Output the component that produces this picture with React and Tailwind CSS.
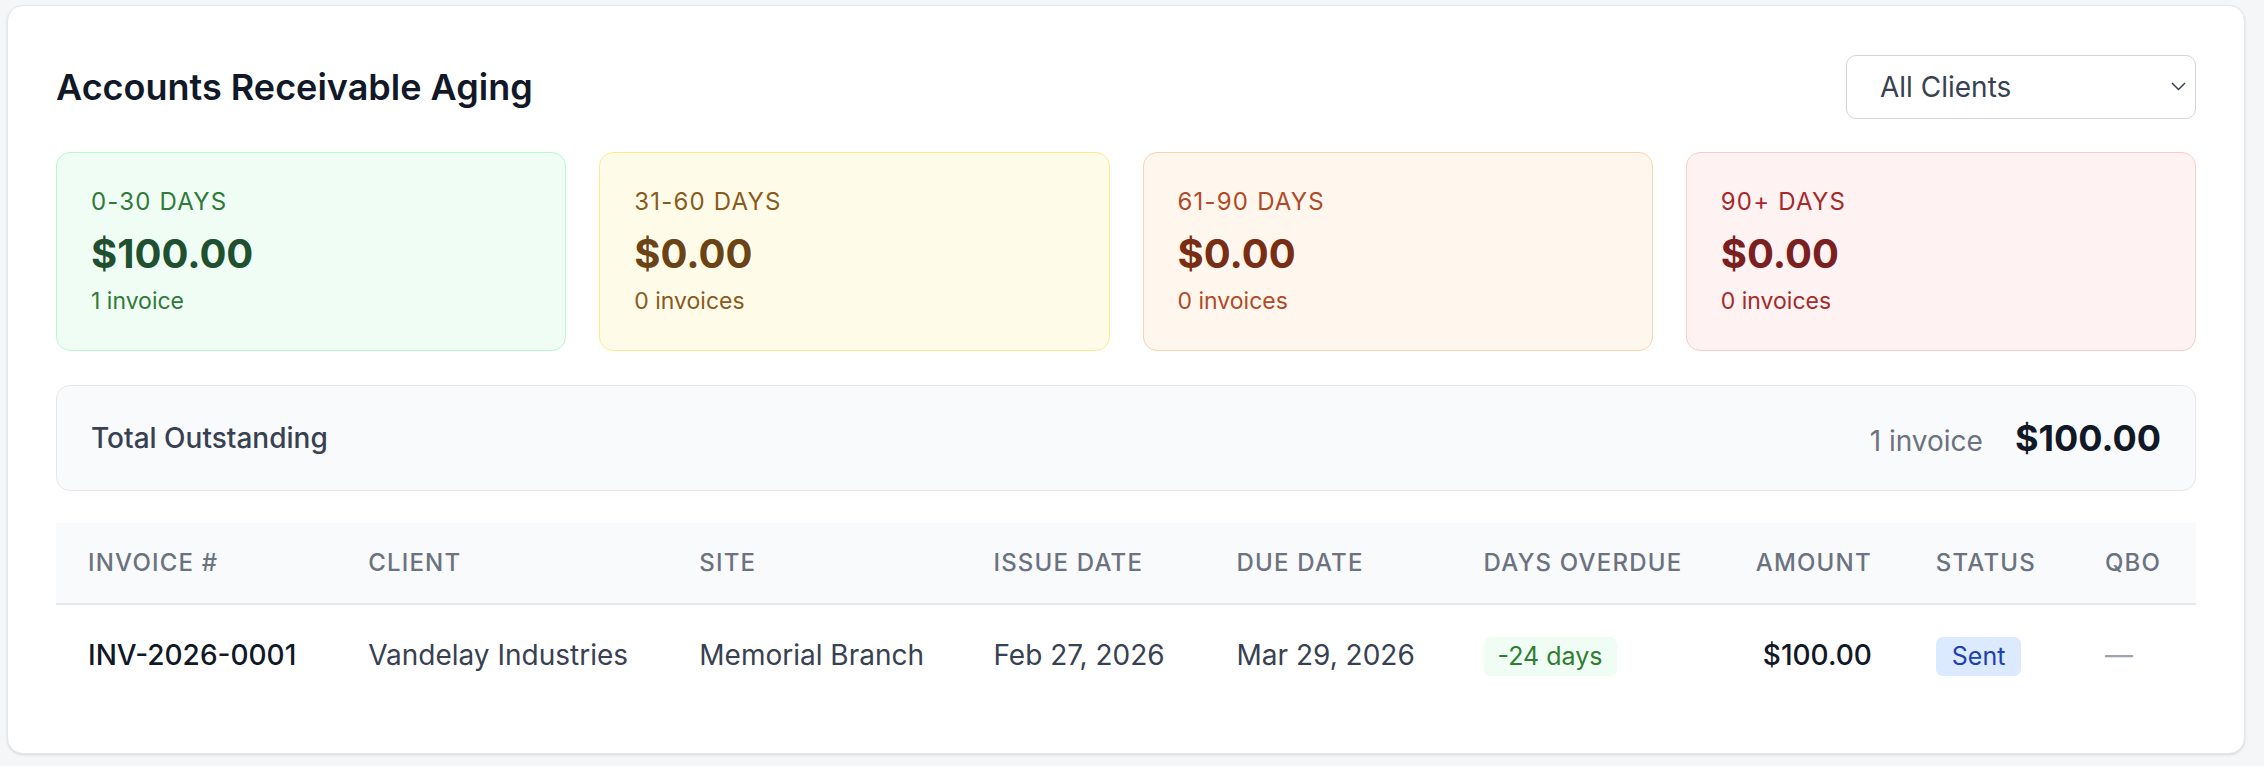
import React from 'react';

const buckets = [
  { label: '0-30 Days', amount: '$100.00', count: '1 invoice', box: 'bg-[#f0fdf4] border-[#bbf7d0]', lbl: 'text-[#2f7a3a]', amt: 'text-[#1f5130]' },
  { label: '31-60 Days', amount: '$0.00', count: '0 invoices', box: 'bg-[#fefce8] border-[#fdeb93]', lbl: 'text-[#8a5a1c]', amt: 'text-[#6a4316]' },
  { label: '61-90 Days', amount: '$0.00', count: '0 invoices', box: 'bg-[#fff7ed] border-[#f5d5ab]', lbl: 'text-[#b04a28]', amt: 'text-[#782e14]' },
  { label: '90+ Days', amount: '$0.00', count: '0 invoices', box: 'bg-[#fef2f2] border-[#f8cccc]', lbl: 'text-[#a52a2a]', amt: 'text-[#7a2020]' },
];

const columns = [
  { name: 'Invoice #', w: 'w-[280px]' },
  { name: 'Client', w: 'w-[331px]' },
  { name: 'Site', w: 'w-[294px]' },
  { name: 'Issue Date', w: 'w-[243px]' },
  { name: 'Due Date', w: 'w-[247px]' },
  { name: 'Days Overdue', w: 'w-[270px]' },
  { name: 'Amount', w: 'w-[182px]', right: true },
  { name: 'Status', w: 'w-[169px]' },
  { name: 'QBO', w: 'w-[123px]' },
];

const AgingCard = ({ b }) => (
  <div className={`rounded-[14px] border-[1.5px] px-[34px] pt-[33px] pb-[33px] ${b.box}`}>
    <div className={`text-[24px] leading-[32px] uppercase tracking-[0.05em] ${b.lbl}`}>{b.label}</div>
    <div className={`mt-[11px] text-[40px] leading-[50px] font-bold ${b.amt}`}>{b.amount}</div>
    <div className={`mt-[6px] text-[23px] leading-[32px] ${b.lbl}`}>{b.count}</div>
  </div>
);

const App = () => {
  return (
    <div className="min-h-screen bg-[#f5f6f8] pl-[7px] pt-[5px] font-['Inter',sans-serif]">
      <div className="w-[2238px] rounded-[16px] border-[1.5px] border-[#e5e7eb] bg-white px-[48px] pt-[49px] pb-[49px] shadow-sm">
        <div className="flex h-[64px] items-center justify-between">
          <h2 className="text-[36px] font-semibold text-[#111827]">Accounts Receivable Aging</h2>
          <div className="relative w-[350px]">
            <select className="h-[64px] w-full appearance-none rounded-[10px] border-[1.5px] border-[#d1d5db] bg-white pl-[33px] text-[28px] text-[#374151] outline-none">
              <option>All Clients</option>
            </select>
            <svg className="pointer-events-none absolute right-[10px] top-[27px]" width="15" height="9" viewBox="0 0 15 9" fill="none">
              <path d="M1 1l6.5 6.5L14 1" stroke="#374151" strokeWidth="1.5" />
            </svg>
          </div>
        </div>

        <div className="mt-[33px] grid grid-cols-4 gap-[33px]">
          {buckets.map(b => (
            <AgingCard key={b.label} b={b} />
          ))}
        </div>

        <div className="mt-[34px] flex h-[106px] items-center justify-between rounded-[14px] border-[1.5px] border-[#e5e7eb] bg-[#f9fafb] px-[34px]">
          <span className="text-[28px] font-medium text-[#374151]">Total Outstanding</span>
          <div className="flex items-baseline gap-[32px]">
            <span className="text-[28px] text-[#6b7280]">1 invoice</span>
            <span className="text-[36px] font-bold text-[#111827]">$100.00</span>
          </div>
        </div>

        <table className="mt-[32px] w-full table-fixed border-collapse">
          <thead>
            <tr className="border-b-2 border-[#e5e7eb] bg-[#f9fafb]">
              {columns.map(c => (
                <th
                  key={c.name}
                  className={`${c.w} whitespace-nowrap px-[32px] py-[26px] text-[24px] leading-[28px] font-medium uppercase tracking-[0.05em] text-[#6b7280] ${c.right ? 'text-right' : 'text-left'}`}
                >
                  {c.name}
                </th>
              ))}
            </tr>
          </thead>
          <tbody>
            <tr className="h-[100px] whitespace-nowrap text-[28px] text-[#374151]">
              <td className="px-[32px] font-medium text-[#111827]">INV-2026-0001</td>
              <td className="px-[32px]">Vandelay Industries</td>
              <td className="px-[32px]">Memorial Branch</td>
              <td className="px-[32px]">Feb 27, 2026</td>
              <td className="px-[32px]">Mar 29, 2026</td>
              <td className="px-[32px]">
                <span className="inline-block rounded-[7px] bg-[#f0fdf4] px-[14px] py-[3px] text-[25px] leading-[33px] text-[#2e7d32]">-24 days</span>
              </td>
              <td className="px-[32px] text-right font-medium text-[#111827]">$100.00</td>
              <td className="px-[32px]">
                <span className="inline-block rounded-[7px] bg-[#dbeafe] px-[16px] py-[3px] text-[25px] leading-[33px] text-[#1e40af]">Sent</span>
              </td>
              <td className="px-[32px] text-[#9ca3af]">—</td>
            </tr>
          </tbody>
        </table>
      </div>
    </div>
  );
};

export default App;
